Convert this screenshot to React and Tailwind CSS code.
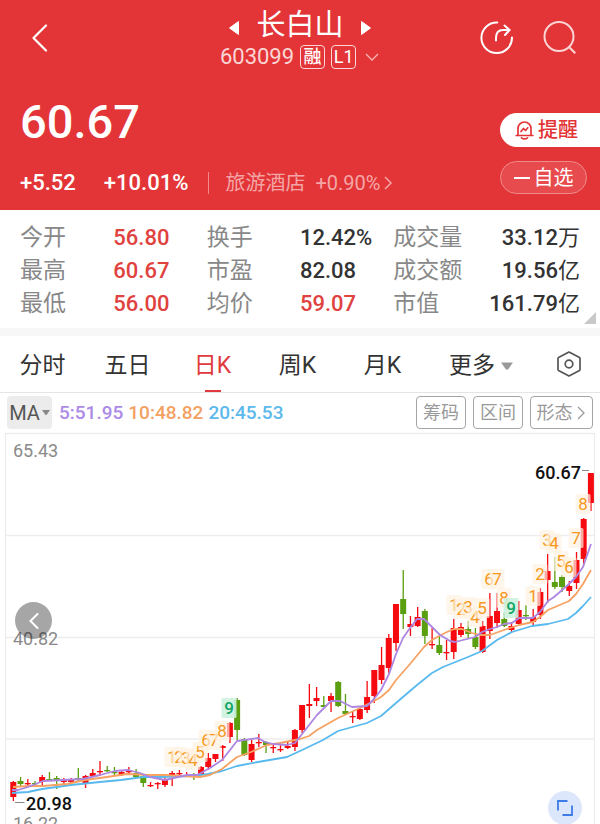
import { useState } from 'react';

// [high, bodyTop, bodyBottom, low, up]
const CANDLES = [
  [781, 782, 797, 801, 1], [777, 781, 784, 786, 0], [779, 783, 784, 786, 1], [781, 783, 784, 786, 0],
  [775, 777, 782, 786, 1], [772, 779, 780, 781, 0], [776, 778, 781, 789, 0], [778, 780, 782, 785, 1],
  [778, 779, 782, 785, 1], [768, 778, 780, 782, 0], [775, 776, 784, 788, 1], [769, 773, 776, 777, 1],
  [761, 771, 772, 776, 1], [766, 770, 771, 772, 0], [767, 772, 773, 776, 0], [770, 772, 775, 776, 1],
  [767, 771, 772, 774, 1], [769, 773, 777, 778, 0], [775, 776, 783, 787, 0], [782, 785, 786, 787, 1],
  [782, 783, 784, 789, 1], [778, 779, 785, 787, 1], [771, 773, 776, 786, 1], [770, 773, 774, 777, 1],
  [772, 775, 776, 777, 1], [773, 775, 777, 780, 0], [766, 767, 775, 777, 1], [753, 758, 767, 770, 1],
  [754, 754, 759, 762, 1], [745, 746, 748, 761, 1], [722, 723, 737, 743, 1], [698, 700, 730, 740, 0],
  [738, 739, 755, 756, 0], [740, 744, 760, 762, 1], [734, 742, 743, 747, 1], [741, 742, 745, 753, 0],
  [744, 747, 748, 753, 1], [745, 749, 750, 752, 1], [742, 746, 748, 749, 1], [729, 730, 747, 751, 1],
  [705, 705, 730, 733, 1], [684, 704, 706, 718, 1], [687, 698, 701, 706, 1], [696, 705, 707, 707, 0],
  [693, 696, 701, 712, 1], [681, 682, 706, 707, 0], [694, 711, 714, 715, 0], [712, 716, 717, 723, 1],
  [708, 709, 719, 720, 1], [681, 697, 710, 713, 1], [670, 670, 696, 703, 1], [647, 665, 680, 684, 1],
  [634, 638, 668, 673, 1], [604, 604, 643, 651, 1], [570, 599, 614, 629, 0], [616, 624, 627, 636, 1],
  [607, 617, 626, 627, 1], [609, 611, 636, 644, 0], [628, 644, 645, 649, 1], [636, 645, 653, 655, 0],
  [640, 652, 653, 660, 1], [619, 628, 652, 659, 1], [623, 627, 635, 637, 1], [621, 629, 634, 638, 0],
  [628, 637, 647, 649, 0], [621, 626, 652, 653, 1], [593, 616, 631, 639, 1], [593, 611, 623, 628, 1],
  [612, 619, 626, 627, 0], [622, 626, 630, 632, 1], [601, 610, 624, 624, 1], [605, 615, 616, 620, 0],
  [609, 617, 622, 625, 1], [588, 592, 615, 619, 1], [554, 571, 580, 603, 1], [557, 582, 587, 589, 0],
  [575, 577, 587, 592, 0], [581, 586, 591, 596, 1], [552, 560, 583, 589, 1], [518, 519, 559, 565, 1],
  [473, 473, 503, 511, 1],
];

const MA_LINES = [
  {
    color: '#58b9ee',
    points: '12,793 28,792 42,789 71,785 100,782 121,780 143,777 160,777 193,776 208,774 222,771 237,766 258,762 287,757 300,751 323,740 338,731 367,723 381,716 396,703 417,685 432,673 443,667 468,657 482,651 497,640 512,632 532,626 548,624 568,619 576,613 583,606 591,597',
  },
  {
    color: '#f6a263',
    points: '13,787 28,786 43,786 67,784 85,780 107,777 127,774 150,775 165,775 200,777 210,775 222,769 237,757 251,752 267,745 280,743 290,741 300,739 309,736 317,730 338,718 360,708 374,701 381,697 389,690 396,680 410,664 424,647 432,640 439,636 447,632 454,629 462,629 472,633 480,635 490,635 504,630 519,625 533,622 540,617 548,610 569,601 576,594 583,584 591,570',
  },
  {
    color: '#ac86e0',
    points: '12,790 18,790 28,787 43,781 63,780 83,779 100,775 115,771 128,770 140,773 150,777 165,780 178,777 187,775 197,775 210,768 222,760 230,750 237,741 258,738 265,742 273,744 287,745 295,743 317,715 331,701 340,701 352,707 367,706 374,699 381,690 389,674 396,654 403,638 410,628 417,619 424,619 440,635 450,641 455,642 463,640 475,637 482,632 490,629 497,627 504,624 512,623 519,618 533,618 540,612 548,601 554,597 561,591 569,584 576,577 583,567 591,544',
  },
];

// nine-turn counts: [number, x, y]
const TURNS = [
  [1, 172, 757], [2, 179, 757], [3, 186, 758], [4, 193, 760], [5, 200, 752], [6, 206, 740], [7, 214, 740], [8, 222, 731], [9, 229, 708],
  [1, 454, 605], [2, 461, 609], [3, 468, 607], [4, 475, 617], [5, 482, 608], [6, 489, 579], [7, 497, 579], [8, 504, 598], [9, 511, 608],
  [1, 533, 596], [2, 540, 574], [3, 547, 540], [4, 554, 543], [5, 561, 561], [6, 569, 567], [7, 576, 538], [8, 583, 504],
];

const STATS = [
  [['今开', '56.80', '', 'up'], ['换手', '12.42%', ''], ['成交量', '33.12', '万']],
  [['最高', '60.67', '', 'up'], ['市盈', '82.08', ''], ['成交额', '19.56', '亿']],
  [['最低', '56.00', '', 'up'], ['均价', '59.07', '', 'up'], ['市值', '161.79', '亿']],
];

const TABS = ['分时', '五日', '日K', '周K', '月K'];

function Header() {
  return (
    <header className="bg-[#e33537] text-white">
      <div className="grid h-[76px] grid-cols-[1fr_auto_1fr]">
        <div className="flex items-center pl-7">
          <button type="button" aria-label="返回">
            <svg className="h-7 w-6" viewBox="0 0 24 28" fill="none" stroke="currentColor" strokeWidth="2.200" strokeLinecap="round" strokeLinejoin="round">
              <path d="M18 1.500 5.500 14 18 26.500" />
            </svg>
          </button>
        </div>
        <div className="flex flex-col items-center pt-1.5">
          <div className="flex h-9 items-center gap-4">
            <button type="button" aria-label="上一只">
              <svg className="mt-2 h-4 w-3" viewBox="0 0 12 16" fill="currentColor" stroke="currentColor" strokeWidth="1" strokeLinejoin="round"><path d="M10.500 1.500v13L1.500 8z" /></svg>
            </button>
            <h1 className="pt-px text-[29px] leading-9">长白山</h1>
            <button type="button" aria-label="下一只">
              <svg className="mt-2 h-4 w-3" viewBox="0 0 12 16" fill="currentColor" stroke="currentColor" strokeWidth="1" strokeLinejoin="round"><path d="M1.500 1.500v13l9-6.500z" /></svg>
            </button>
          </div>
          <div className="mt-[3px] flex h-6 items-center gap-1.5 text-[#fbd5d5]">
            <span className="text-[22px] leading-6">603099</span>
            <span className="flex h-6 w-[25px] items-center justify-center rounded border border-[#fbd5d5] text-[18px] font-medium leading-5 text-white">融</span>
            <span className="flex h-6 w-[25px] items-center justify-center rounded border border-[#fbd5d5] text-[18px] leading-5 text-white">L1</span>
            <svg className="ml-0.5 h-3 w-4" viewBox="0 0 16 12" fill="none" stroke="#f6b3b3" strokeWidth="1.300"><path d="M2 3l6 6 6-6" /></svg>
          </div>
        </div>
        <div className="flex items-center justify-end gap-[29px] pr-[23px]">
          <button type="button" aria-label="分享">
            <svg className="h-[34px] w-[34px]" viewBox="0 0 34 34" fill="none" stroke="currentColor" strokeWidth="2" strokeLinecap="round" strokeLinejoin="round">
              <path d="M17.300 1.500A15.300 15.300 0 1 0 32 16.500" />
              <path d="M16 19.500v-2.500c0-5 2.500-8 7-8h6.500" />
              <path d="M24.500 4.500 29.500 9 25 14" />
            </svg>
          </button>
          <button type="button" aria-label="搜索">
            <svg className="h-[34px] w-[34px]" viewBox="0 0 34 34" fill="none" stroke="#fbd5d5" strokeWidth="2">
              <circle cx="16" cy="15.500" r="14.500" />
              <path d="M26.300 26.300 32.300 32.300" />
            </svg>
          </button>
        </div>
      </div>

      <div className="flex justify-between pb-[15px] pl-5">
        <div className="pt-5">
          <div className="text-[47px] font-medium leading-[52px]">60.67</div>
          <div className="mt-[23px] flex h-6 items-center whitespace-nowrap text-[22px] font-medium leading-6">
            <span>+5.52</span>
            <span className="ml-7">+10.01%</span>
            <span className="ml-5 mr-4 h-[22px] w-px bg-[#f08b8c]" />
            <a href="#sector" className="flex items-center font-normal text-[#f4a6a7]">
              <span className="text-[20px]">旅游酒店</span>
              <span className="ml-2.5 text-[20px]">+0.90%</span>
              <svg className="ml-0.5 h-4 w-3" viewBox="0 0 12 16" fill="none" stroke="currentColor" strokeWidth="1.500"><path d="M3 2l6 6-6 6" /></svg>
            </a>
          </div>
        </div>
        <div className="flex flex-col pt-[37px]">
          <button type="button" className="flex h-[34px] w-[100px] items-center gap-1 rounded-l-full bg-white pl-[15px] text-[20px] font-medium text-[#e33537]">
            <svg className="h-5 w-[19px]" viewBox="0 0 19 20" fill="none" stroke="currentColor" strokeWidth="1.700" strokeLinecap="round" strokeLinejoin="round">
              <path d="M1.200 15.500h16.600M3 15.500V8.500a6.500 6.500 0 0 1 13 0v7M6.500 17.800c1.800 1.400 4.200 1.400 6 0" />
              <path d="M6 11.500 8.500 8.500 10.500 10.500 12.800 7.800" />
            </svg>
            提醒
          </button>
          <button type="button" className="mt-3.5 flex h-[33px] w-[87px] items-center justify-center rounded-full border border-[#f08b8c] bg-[#e84b4d] text-[20px]">
            <span className="mr-1 h-0.5 w-4 bg-white" />自选
          </button>
        </div>
      </div>
    </header>
  );
}

function Stats() {
  return (
    <section className="relative border-b-8 border-[#f7f7f7] px-5 pb-2 pt-[11px]">
      <table className="w-full table-fixed border-collapse whitespace-nowrap text-[22px]">
        <tbody>
          {STATS.map((row) => (
            <tr key={row[0][0]} className="h-[33px]">
              {row.map(([label, value, unit, tone], i) => [
                <th key={label} scope="row" className="p-0 text-left text-[23px] font-normal leading-8 text-[#888]">{label}</th>,
                <td key={value} className={`p-0 font-medium leading-8 ${tone === 'up' ? 'text-[#e0423f]' : 'text-[#333]'}`}>
                  <div className={i === 2 ? 'flex justify-end' : ''}>
                    {value}
                    {unit && <span className="font-normal">{unit}</span>}
                  </div>
                </td>,
              ])}
            </tr>
          ))}
        </tbody>
      </table>
      <svg className="absolute bottom-1 right-1 h-3 w-3" viewBox="0 0 12 12" fill="#c9c9c9"><path d="M12 0v12H0z" /></svg>
    </section>
  );
}

function Tabs() {
  const [active, setActive] = useState('日K');
  return (
    <nav className="flex h-[57px] border-b border-[#e4e4e4] text-[23px] text-[#333]">
      {TABS.map((tab) => (
        <button
          key={tab}
          type="button"
          onClick={() => setActive(tab)}
          className={`relative flex-[85] pt-1 ${tab === active ? 'text-[#e0393e]' : ''}`}
        >
          {tab}
          {tab === active && <span className="absolute bottom-0 left-1/2 h-0.5 w-4 -translate-x-1/2 bg-[#e0393e]" />}
        </button>
      ))}
      <button type="button" className="flex flex-[112] items-center justify-center gap-1.5 pt-1">
        更多
        <svg className="h-2 w-3" viewBox="0 0 12 8" fill="#999"><path d="M0 .5h12L7 7.500H5z" /></svg>
      </button>
      <button type="button" aria-label="设置" className="flex flex-[63] items-center justify-center">
        <svg className="h-[26px] w-6" viewBox="0 0 24 26" fill="none" stroke="#555" strokeWidth="1.700" strokeLinejoin="round">
          <path d="M12 1 22.500 6.500Q23 7 23 7.500v11q0 .5-.5 1L12 25 1.500 19.500Q1 19 1 18.500v-11q0-.5.5-1z" />
          <circle cx="12" cy="13" r="3.800" />
        </svg>
      </button>
    </nav>
  );
}

function Indicators() {
  return (
    <div className="flex h-[39px] items-center whitespace-nowrap px-[7px] text-[19px]">
      <button type="button" className="flex h-[33px] w-[45px] items-center justify-center gap-0.5 rounded bg-[#ececec] text-[20px] text-[#555]">
        MA
        <svg className="h-[5px] w-2" viewBox="0 0 8 5" fill="#888"><path d="M0 0h8L4.500 5h-1z" /></svg>
      </button>
      <div className="flex gap-[5px] pl-[7px] pt-px font-medium">
        <span className="text-[#ac8be6]">5:51.95</span>
        <span className="text-[#f3a163]">10:48.82</span>
        <span className="text-[#5bb9ec]">20:45.53</span>
      </div>
      <div className="ml-auto flex gap-[7px] text-[18px] text-[#999]">
        <button type="button" className="h-[33px] w-[50px] rounded border border-[#a5a5a5]">筹码</button>
        <button type="button" className="h-[33px] w-[50px] rounded border border-[#a5a5a5]">区间</button>
        <button type="button" className="flex h-[33px] w-[63px] items-center justify-center gap-0.5 rounded border border-[#a5a5a5]">
          形态
          <svg className="h-4 w-3" viewBox="0 0 12 16" fill="none" stroke="currentColor" strokeWidth="1.300"><path d="M3 2l6 6-6 6" /></svg>
        </button>
      </div>
    </div>
  );
}

function Chart() {
  return (
    <div className="relative">
      <svg className="block w-full" viewBox="0 432 600 392" role="img" aria-label="日K线图">
        <g stroke="#ededed" strokeWidth="1.300" fill="none">
          <path d="M5.500 830V433.500H594.500V830" />
          <path d="M5.500 535.500H594.500M5.500 637.500H594.500M5.500 739H594.500" />
        </g>
        {CANDLES.map(([high, top, bottom, low, up], i) => {
          const x = 13.3 + i * 7.22;
          const color = up ? '#f50a10' : '#5a9f10';
          return (
            <g key={i} fill={color}>
              <rect x={x - 0.6} y={high} width="1.300" height={Math.max(low - high, 1)} />
              <rect x={x - 3} y={top} width="6" height={Math.max(bottom - top, 1.3)} />
            </g>
          );
        })}
        {TURNS.map(([n, x, y], i) => (
          <g key={i}>
            <rect x={x - 7.5} y={y - 10} width="15" height="20" rx="1.500" fill={n === 9 ? '#cdf1df' : '#fff2e2'} fillOpacity={n === 9 ? 0.9 : 0.7} />
            <text x={x} y={y + 6} textAnchor="middle" fontSize="17" fontWeight={n === 9 ? 500 : 400} fill={n === 9 ? '#12a565' : '#f5981c'}>{n}</text>
          </g>
        ))}
        {MA_LINES.map((line) => (
          <polyline key={line.color} points={line.points} fill="none" stroke={line.color} strokeWidth="1.800" strokeLinejoin="round" />
        ))}
        <g fontSize="18" fill="#8a8a8a">
          <text x="13" y="457">65.43</text>
          <text x="13" y="645">40.82</text>
          <text x="13" y="830">16.22</text>
        </g>
        <g fontSize="18" fontWeight="500" fill="#111">
          <text x="535" y="479">60.67</text>
          <text x="26" y="810">20.98</text>
        </g>
        <path d="M582 470.500H589M15 802.500H24.500" stroke="#888" strokeWidth="1" />
      </svg>
      <button type="button" aria-label="向左" className="absolute left-[15px] top-[170px] flex h-[37px] w-[37px] items-center justify-center rounded-full bg-black/35">
        <svg className="h-4 w-3" viewBox="0 0 12 16" fill="none" stroke="#fff" strokeWidth="2" strokeLinecap="round"><path d="M9.500 1 2.500 8l7 7" /></svg>
      </button>
      <button type="button" aria-label="全屏" className="absolute -bottom-px right-[18px] flex h-[34px] w-[34px] items-center justify-center rounded-full bg-[#dde7fb]">
        <svg className="h-4 w-4" viewBox="0 0 16 16" fill="none" stroke="#3d7be6" strokeWidth="1.800"><path d="M1 10.500V1h9.500M15 5.500V15H5.500" /></svg>
      </button>
    </div>
  );
}

export default function App() {
  return (
    <main className="overflow-hidden bg-white font-['Roboto','Noto_Sans_CJK_SC',sans-serif]">
      <Header />
      <Stats />
      <Tabs />
      <Indicators />
      <Chart />
    </main>
  );
}
